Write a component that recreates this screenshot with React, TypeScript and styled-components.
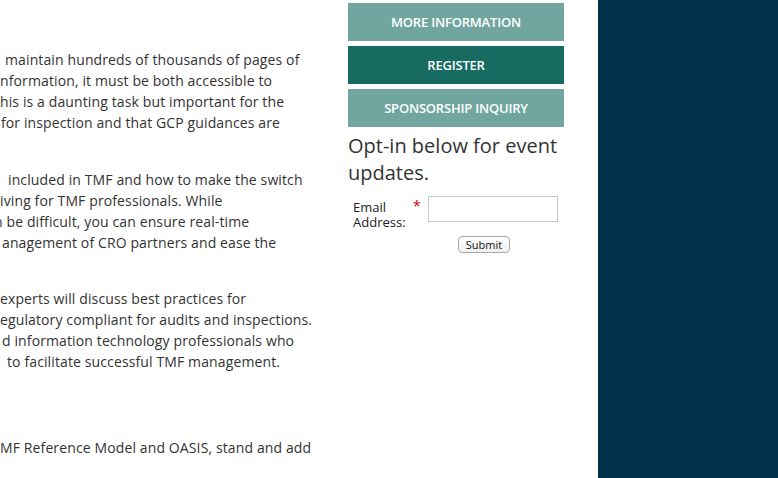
import styled, { createGlobalStyle } from "styled-components";

const GlobalStyle = createGlobalStyle`
  html, body {
    margin: 0;
    padding: 0;
    background: #ffffff;
  }
  body {
    font-family: "Open Sans", "DejaVu Sans", sans-serif;
    color: #333333;
  }
`;

interface LineProps {
  $shift?: number;
}

// the copy column is scrolled off to the left, so each line starts part way in
const paragraphs: { gap: number; lines: { text: string; shift: number }[] }[] = [
  {
    gap: 49,
    lines: [
      { text: "maintain hundreds of thousands of pages of", shift: 5 },
      { text: "nformation, it must be both accessible to", shift: 0 },
      { text: "his is a daunting task but important for the", shift: 0 },
      { text: "for inspection and that GCP guidances are", shift: 1 },
    ],
  },
  {
    gap: 36,
    lines: [
      { text: "included in TMF and how to make the switch", shift: 8 },
      { text: "iving for TMF professionals. While", shift: 0 },
      { text: "n be difficult, you can ensure real-time", shift: -6 },
      { text: "anagement of CRO partners and ease the", shift: 2 },
    ],
  },
  {
    gap: 35,
    lines: [
      { text: "experts will discuss best practices for", shift: 0 },
      { text: "egulatory compliant for audits and inspections.", shift: 0 },
      { text: "d information technology professionals who", shift: 2 },
      { text: "to facilitate successful TMF management.", shift: 7 },
    ],
  },
  {
    gap: 65,
    lines: [{ text: "MF Reference Model and OASIS, stand and add", shift: 0 }],
  },
];

const buttons = [
  { label: "MORE INFORMATION", primary: false },
  { label: "REGISTER", primary: true },
  { label: "SPONSORSHIP INQUIRY", primary: false },
];

export default function App() {
  return (
    <>
      <GlobalStyle />
      <Page>
        <Main>
          <Content>
            {paragraphs.map((p, i) => (
              <Paragraph key={i} $gap={p.gap}>
                {p.lines.map((l) => (
                  <Line key={l.text} $shift={l.shift}>
                    {l.text}
                  </Line>
                ))}
              </Paragraph>
            ))}
          </Content>
          <Sidebar>
            <ButtonStack>
              {buttons.map((b) => (
                <ActionButton key={b.label} $primary={b.primary}>
                  {b.label}
                </ActionButton>
              ))}
            </ButtonStack>
            <OptInTitle>Opt-in below for event updates.</OptInTitle>
            <Form onSubmit={(e) => e.preventDefault()}>
              <FieldRow>
                <Label htmlFor="email">Email Address:</Label>
                <Required>*</Required>
                <Input id="email" type="email" />
              </FieldRow>
              <SubmitRow>
                <SubmitButton type="submit">Submit</SubmitButton>
              </SubmitRow>
            </Form>
          </Sidebar>
        </Main>
        <DarkPanel />
      </Page>
    </>
  );
}

const Page = styled.div`
  display: flex;
  height: 100vh;
  overflow: hidden;
`;

const Main = styled.div`
  display: flex;
  width: 598px;
  flex-shrink: 0;
`;

const Content = styled.div`
  width: 330px;
  overflow: hidden;
  font-size: 14px;
  line-height: 21px;
  letter-spacing: 0.12px;
  color: #333333;
`;

const Paragraph = styled.p<{ $gap: number }>`
  margin: ${(p) => p.$gap}px 0 0;
`;

const Line = styled.span<LineProps>`
  display: block;
  white-space: nowrap;
  text-indent: ${(p) => p.$shift ?? 0}px;
`;

const Sidebar = styled.aside`
  width: 216px;
  margin-left: 18px;
  padding-top: 3px;
`;

const ButtonStack = styled.div`
  display: flex;
  flex-direction: column;
  gap: 5px;
`;

const ActionButton = styled.a<{ $primary?: boolean }>`
  display: flex;
  align-items: center;
  justify-content: center;
  height: 38px;
  background: ${(p) => (p.$primary ? "#176b61" : "#70a69f")};
  color: #ffffff;
  font-size: 13px;
  font-weight: 600;
  letter-spacing: -0.2px;
  text-decoration: none;
  cursor: pointer;
`;

const OptInTitle = styled.h3`
  margin: 5px 0 0;
  font-size: 20px;
  line-height: 27px;
  font-weight: 400;
  color: #333333;
`;

const Form = styled.form`
  margin-top: 10px;
`;

const FieldRow = styled.div`
  display: flex;
  align-items: flex-start;
`;

const Label = styled.label`
  width: 60px;
  margin-left: 5px;
  margin-top: 4px;
  font-size: 13px;
  line-height: 15px;
  color: #222222;
`;

const Required = styled.span`
  width: 15px;
  margin-top: 2px;
  color: #cc0000;
  font-size: 14px;
  line-height: 15px;
`;

const Input = styled.input`
  box-sizing: border-box;
  width: 130px;
  height: 26px;
  margin: 0;
  border: 1px solid #c8c8c8;
  padding: 2px 4px;
  font-size: 13px;
`;

const SubmitRow = styled.div`
  display: flex;
  padding-left: 110px;
  margin-top: 6px;
`;

const SubmitButton = styled.button`
  box-sizing: border-box;
  width: 52px;
  height: 17px;
  padding: 0;
  border: 1px solid #a9a9a9;
  border-radius: 4px;
  background: linear-gradient(#ffffff, #f0f0f0);
  font-family: "Open Sans", "DejaVu Sans", sans-serif;
  font-size: 11px;
  line-height: 15px;
  color: #111111;
`;

const DarkPanel = styled.div`
  flex: 1;
  background: #01324b;
`;
